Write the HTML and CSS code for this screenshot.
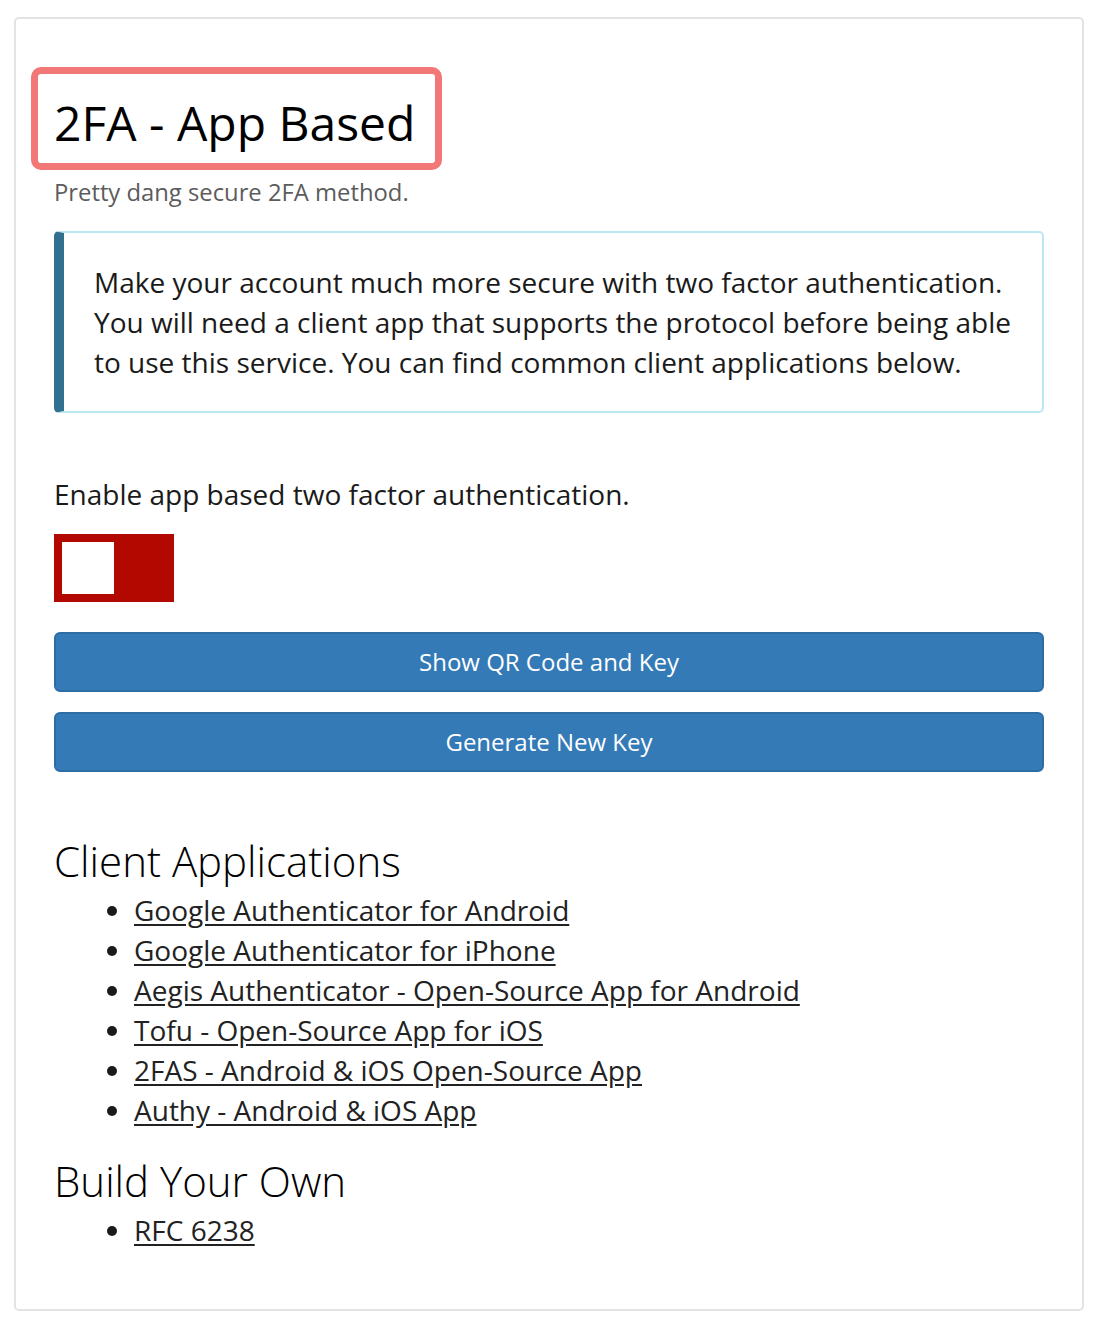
FILE: index.html
```html
<!DOCTYPE html>
<html lang="en">
<head>
<meta charset="utf-8">
<title>2FA - App Based</title>
<link rel="stylesheet" href="styles.css">
</head>
<body>
<div class="card">
  <h1 class="title">2FA - App Based</h1>
  <p class="subtitle">Pretty dang secure 2FA method.</p>
  <div class="callout">
    Make your account much more secure with two factor authentication. You will need a client app that supports the protocol before being able to use this service. You can find common client applications below.
  </div>
  <p class="enable-label">Enable app based two factor authentication.</p>
  <div class="toggle"><span class="knob"></span></div>
  <button class="btn" type="button">Show QR Code and Key</button>
  <button class="btn" type="button">Generate New Key</button>
  <h2 class="section-title">Client Applications</h2>
  <ul class="links">
    <li><a href="#">Google Authenticator for Android</a></li>
    <li><a href="#">Google Authenticator for iPhone</a></li>
    <li><a href="#">Aegis Authenticator - Open-Source App for Android</a></li>
    <li><a href="#">Tofu - Open-Source App for iOS</a></li>
    <li><a href="#">2FAS - Android &amp; iOS Open-Source App</a></li>
    <li><a href="#">Authy - Android &amp; iOS App</a></li>
  </ul>
  <h2 class="section-title build">Build Your Own</h2>
  <ul class="links">
    <li><a href="#">RFC 6238</a></li>
  </ul>
</div>
</body>
</html>
```

FILE: styles.css
```css
* { box-sizing: border-box; }
html, body { margin: 0; padding: 0; background: #fff; }
body {
  font-family: "Open Sans", "Noto Sans", sans-serif;
  font-size: 28px;
  line-height: 40px;
  color: #1a1a1a;
}
.card {
  margin: 17px 16px 18px 14px;
  border: 2px solid #e3e3e3;
  border-radius: 5px;
  padding: 38px 38px 59px 38px;
  display: flex;
  flex-direction: column;
  align-items: flex-start;
}
.title {
  margin: 10px 0 0 -23px;
  border: 7px solid #f27777;
  border-radius: 10px;
  padding: 21px 20px 12px 16px;
  font-size: 48px;
  line-height: 56px;
  font-weight: 400;
  color: #000;
}
.subtitle {
  margin: 5px 0 0 0;
  font-size: 23.8px;
  line-height: 34px;
  color: #5c5c5c;
}
.callout {
  align-self: stretch;
  margin-top: 22px;
  border: 2px solid #bce8f1;
  border-left: 10px solid #31708f;
  border-radius: 5px;
  padding: 29px 30px 29px 30px;
  color: #1a1a1a;
}
.enable-label {
  margin: 61px 0 0 0;
}
.toggle {
  margin-top: 20px;
  width: 120px;
  height: 68px;
  background: #b30800;
  padding: 8px;
}
.knob {
  display: block;
  width: 52px;
  height: 52px;
  background: #fff;
}
.btn {
  align-self: stretch;
  height: 60px;
  margin-top: 30px;
  border: 2px solid #2e6da4;
  border-radius: 6px;
  background: #337ab7;
  color: #fff;
  font-family: "Open Sans", "Noto Sans", sans-serif;
  font-size: 24px;
  line-height: 30px;
  padding: 0;
}
.btn + .btn { margin-top: 20px; }
.section-title {
  margin: 66px 0 0 0;
  font-size: 42px;
  line-height: 46px;
  font-weight: 300;
  color: #000;
}
.section-title.build { margin-top: 28px; }
.links {
  margin: 6px 0 0 0;
  padding-left: 80px;
  list-style: disc;
}
.links a {
  color: #222;
  text-decoration: underline;
  text-underline-offset: 3px;
}
```
